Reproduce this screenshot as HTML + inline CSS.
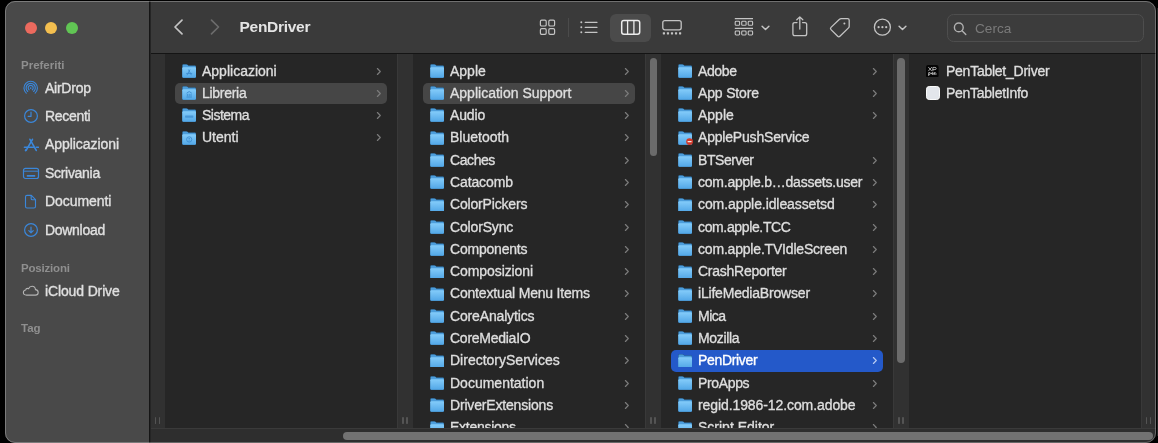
<!DOCTYPE html>
<html><head><meta charset="utf-8"><title>Finder</title>
<style>
html,body{margin:0;padding:0;background:#000;}
body{width:1158px;height:443px;overflow:hidden;position:relative;font-family:"Liberation Sans",sans-serif;}
#win{position:absolute;left:5px;top:1px;width:1151px;height:442px;border-radius:10px;overflow:hidden;background:#262626;box-sizing:border-box;}
#winb{position:absolute;left:5px;top:1px;width:1151px;height:442px;border-radius:10px;box-sizing:border-box;border:1px solid rgba(255,255,255,0.28);pointer-events:none;z-index:50;}
#inner{will-change:transform;position:absolute;left:-5px;top:-1px;width:1158px;height:443px;}
#sidebar{position:absolute;left:0;top:0;width:149px;height:443px;background:#494949;}
#sdiv{position:absolute;left:149px;top:0;width:2px;height:443px;background:linear-gradient(90deg,#151515 0,#151515 50%,#252525 50%);z-index:5;}
#toolbar{position:absolute;left:150px;top:0;width:1008px;height:53px;background:#3a3a3a;}
#tline{position:absolute;left:150px;top:53px;width:1008px;height:1px;background:#141414;}
.strip{position:absolute;top:54px;height:376px;background:#313131;box-sizing:border-box;border-left:1px solid #393939;}
.t{position:absolute;-webkit-text-stroke:0.35px currentColor;color:#dedede;font-size:14px;line-height:22px;white-space:nowrap;}
.fi,.cv{position:absolute;}
.selg{position:absolute;width:212px;height:21.7px;border-radius:5px;background:#464646;}
.selb{position:absolute;width:212px;height:21.7px;border-radius:5px;background:#2459c9;}
.sh{position:absolute;color:#8f8f8f;font-size:11.5px;font-weight:bold;line-height:14px;}
.si{position:absolute;-webkit-text-stroke:0.35px currentColor;color:#e0e0e0;font-size:14px;line-height:20px;white-space:nowrap;}
.abs{position:absolute;}
.hd{position:absolute;top:417px;width:1.5px;height:7px;background:#545454;border-radius:0.7px;}
.vth{position:absolute;width:7.6px;border-radius:4px;background:#6b6b6b;}
</style></head><body>
<svg width="0" height="0" style="position:absolute"><defs><linearGradient id="fg" x1="0" y1="0" x2="0" y2="1"><stop offset="0" stop-color="#84ccfa"/><stop offset="1" stop-color="#52a7e7"/></linearGradient></defs></svg>
<div id="win"><div id="inner">
<div id="sidebar"></div><div id="sdiv"></div>
<div id="toolbar"></div><div id="tline"></div>
<div class="strip" style="left:150px;width:15px"></div>
<div class="hd" style="left:154.6px"></div><div class="hd" style="left:158.8px"></div>
<div class="strip" style="left:397px;width:16px"></div>
<div class="hd" style="left:402.1px"></div><div class="hd" style="left:406.3px"></div>
<div class="strip" style="left:645px;width:16px"></div>
<div class="hd" style="left:650.1px"></div><div class="hd" style="left:654.3px"></div>
<div class="strip" style="left:893px;width:16px"></div>
<div class="hd" style="left:898.1px"></div><div class="hd" style="left:902.3px"></div>
<div class="strip" style="left:1141px;width:15px"></div>
<div class="hd" style="left:1145.6px"></div><div class="hd" style="left:1149.8px"></div>
<div class="vth" style="left:649.5px;top:57.5px;height:98px"></div>
<div class="vth" style="left:897.3px;top:57.5px;height:305px"></div>
<div class="abs" style="left:25px;top:21.8px;width:12px;height:12px;border-radius:6px;background:#ec6a5e"></div>
<div class="abs" style="left:45.3px;top:21.8px;width:12px;height:12px;border-radius:6px;background:#f4bf4f"></div>
<div class="abs" style="left:65.5px;top:21.8px;width:12px;height:12px;border-radius:6px;background:#61c554"></div>
<div class="sh" style="left:21px;top:58px">Preferiti</div>
<div class="sh" style="left:21px;top:261px;letter-spacing:-0.19px">Posizioni</div>
<div class="sh" style="left:21px;top:321px">Tag</div>
<div class="si" style="left:45px;top:78px;letter-spacing:-0.250px">AirDrop</div>
<div class="si" style="left:45px;top:106px;letter-spacing:-0.300px">Recenti</div>
<div class="si" style="left:45px;top:134px;letter-spacing:-0.055px">Applicazioni</div>
<div class="si" style="left:45px;top:163px;letter-spacing:-0.300px">Scrivania</div>
<div class="si" style="left:45px;top:191px;letter-spacing:-0.075px">Documenti</div>
<div class="si" style="left:45px;top:220px;letter-spacing:-0.300px">Download</div>
<div class="si" style="left:45px;top:281px;letter-spacing:-0.136px">iCloud Drive</div>
<svg class="abs" style="left:23.3px;top:79.8px" width="15.4" height="15.4" viewBox="0 0 16 16" fill="none" stroke="#3b87da" stroke-width="1.2" stroke-linecap="round"><path d="M3.4 13.6 A7 7 0 1 1 12.6 13.6"/><path d="M4.9 11.9 A4.8 4.8 0 1 1 11.1 11.9"/><path d="M6.3 10.2 A2.6 2.6 0 1 1 9.7 10.2"/><circle cx="8" cy="8.4" r="0.9" fill="#3b87da" stroke="none"/></svg>
<svg class="abs" style="left:23px;top:108.4px" width="16" height="16" viewBox="0 0 16 16" fill="none" stroke="#3b87da" stroke-width="1.2" stroke-linecap="round" stroke-linejoin="round"><circle cx="8" cy="8" r="6.4"/><path d="M8 4.2 L8 8.4 L5.2 8.4"/></svg>
<svg class="abs" style="left:22.6px;top:136.5px" width="16.8" height="16.8" viewBox="0 0 16 16" fill="none" stroke="#3b87da" stroke-width="1.55" stroke-linecap="round" stroke-linejoin="round"><path d="M6.6 2.2 L12.6 12.8"/><path d="M9 2.2 L3 12.8"/><path d="M1.4 9.8 L10.2 9.8"/><path d="M12.6 9.8 L14.6 9.8"/><path d="M2.4 12.9 L2.9 12.1"/></svg>
<svg class="abs" style="left:22px;top:166.5px" width="18" height="13" viewBox="0 0 18 13" fill="none" stroke="#3b87da" stroke-width="1.2"><rect x="1.5" y="1.3" width="15" height="10.2" rx="2"/><path d="M1.5 4.2 L16.5 4.2" stroke-width="1"/><path d="M5.4 8.9 L12.6 8.9" stroke-width="1.6" stroke-linecap="round"/></svg>
<svg class="abs" style="left:24.3px;top:194.2px" width="13.2" height="15.6" viewBox="0 0 14 16" fill="none" stroke="#3b87da" stroke-width="1.2" stroke-linejoin="round"><path d="M3.2 1.2 L7.8 1.2 L12.2 5.6 L12.2 13 Q12.2 14.6 10.6 14.6 L3.2 14.6 Q1.6 14.6 1.6 13 L1.6 2.8 Q1.6 1.2 3.2 1.2 Z"/><path d="M7.6 1.4 L7.6 4.4 Q7.6 5.8 9 5.8 L12 5.8"/></svg>
<svg class="abs" style="left:23px;top:222px" width="16" height="16" viewBox="0 0 16 16" fill="none" stroke="#3b87da" stroke-width="1.2" stroke-linecap="round" stroke-linejoin="round"><circle cx="8" cy="8" r="6.4"/><path d="M8 5.2 L8 10.6 M5.8 8.6 L8 10.8 L10.2 8.6"/></svg>
<svg class="abs" style="left:22.1px;top:283.7px" width="17.6" height="13.2" viewBox="0 0 20 15" fill="none" stroke="#b4b4b4" stroke-width="1.25" stroke-linejoin="round"><path d="M5.2 12.6 Q1.6 12.6 1.6 9.6 Q1.6 7.2 4.2 6.8 Q4.4 5 6.2 5 Q6.9 5 7.4 5.3 Q8.6 2.6 11.4 2.6 Q15 2.6 15.3 6.4 Q18.4 6.8 18.4 9.6 Q18.4 12.6 15.2 12.6 Z"/></svg>
<svg class="abs" style="left:172px;top:18px" width="13" height="18" viewBox="0 0 13 18" fill="none" stroke-linecap="round" stroke-linejoin="round" stroke-width="1.7"><path d="M10 2.2 L3 9 L10 15.8" stroke="#c4c4c4"/></svg>
<svg class="abs" style="left:208px;top:18px" width="13" height="18" viewBox="0 0 13 18" fill="none" stroke-linecap="round" stroke-linejoin="round" stroke-width="1.7"><path d="M3.5 2.2 L10.5 9 L3.5 15.8" stroke="#6c6c6c"/></svg>
<div class="abs" style="left:239.5px;top:17px;font-size:15.5px;font-weight:bold;color:#e4e4e4;line-height:20px;white-space:nowrap;letter-spacing:-0.28px">PenDriver</div>
<svg class="abs" style="left:539px;top:19px" width="17" height="17" viewBox="0 0 17 17" fill="none" stroke="#c4c4c4" stroke-width="1.2"><rect x="1.4" y="1.2" width="5.8" height="5.8" rx="1.3"/><rect x="9.8" y="1.2" width="5.8" height="5.8" rx="1.3"/><rect x="1.4" y="9.6" width="5.8" height="5.8" rx="1.3"/><rect x="9.8" y="9.6" width="5.8" height="5.8" rx="1.3"/></svg>
<div class="abs" style="left:568px;top:18px;width:1px;height:19px;background:#4b4b4b"></div>
<svg class="abs" style="left:579px;top:19px" width="20" height="17" viewBox="0 0 20 17" fill="none" stroke="#c4c4c4" stroke-width="1.3" stroke-linecap="round"><path d="M6.2 3.3 L18 3.3 M6.2 8.3 L18 8.3 M6.2 13.3 L18 13.3"/><circle cx="2.3" cy="3.3" r="1" fill="#c4c4c4" stroke="none"/><circle cx="2.3" cy="8.3" r="1" fill="#c4c4c4" stroke="none"/><circle cx="2.3" cy="13.3" r="1" fill="#c4c4c4" stroke="none"/></svg>
<div class="abs" style="left:610px;top:13.5px;width:40.5px;height:28.5px;border-radius:6px;background:#4b4b4b"></div>
<svg class="abs" style="left:620px;top:19px" width="22" height="17" viewBox="0 0 22 17" fill="none" stroke="#ececec" stroke-width="1.5"><rect x="1.7" y="1.4" width="18" height="13.8" rx="2.2"/><path d="M7.6 1.4 L7.6 15.2 M13.9 1.4 L13.9 15.2" stroke-width="1.3"/></svg>
<svg class="abs" style="left:661px;top:19px" width="22" height="17" viewBox="0 0 22 17" fill="none" stroke="#c4c4c4" stroke-width="1.3"><rect x="1.8" y="1.6" width="18.4" height="9.2" rx="2"/><g fill="#c4c4c4" stroke="none"><rect x="1.8" y="13.2" width="2.2" height="2.2" rx="0.4"/><rect x="5.85" y="13.2" width="2.2" height="2.2" rx="0.4"/><rect x="9.9" y="13.2" width="2.2" height="2.2" rx="0.4"/><rect x="13.95" y="13.2" width="2.2" height="2.2" rx="0.4"/><rect x="18" y="13.2" width="2.2" height="2.2" rx="0.4"/></g></svg>
<svg class="abs" style="left:734px;top:17px" width="20" height="20" viewBox="0 0 20 20" fill="none" stroke="#c4c4c4" stroke-width="1.1"><path d="M0.8 1.6 L19 1.6 M0.8 11.3 L19 11.3" stroke-width="1.2"/><rect x="1.2" y="4.3" width="4.4" height="4" rx="0.9"/><rect x="7.7" y="4.3" width="4.4" height="4" rx="0.9"/><rect x="14.2" y="4.3" width="4.4" height="4" rx="0.9"/><rect x="1.2" y="14" width="4.4" height="4" rx="0.9"/><rect x="7.7" y="14" width="4.4" height="4" rx="0.9"/><rect x="14.2" y="14" width="4.4" height="4" rx="0.9"/></svg>
<svg class="abs" style="left:759.6px;top:24px" width="11" height="8" viewBox="0 0 11 8" fill="none" stroke="#c4c4c4" stroke-width="1.5" stroke-linecap="round" stroke-linejoin="round"><path d="M2.1 2.2 L5.5 5.5 L8.9 2.2"/></svg>
<svg class="abs" style="left:791px;top:15px" width="18" height="23" viewBox="0 0 18 23" fill="none" stroke="#c4c4c4" stroke-width="1.3" stroke-linecap="round" stroke-linejoin="round"><path d="M6 7.6 L3.8 7.6 Q1.9 7.6 1.9 9.5 L1.9 18.8 Q1.9 20.7 3.8 20.7 L13.8 20.7 Q15.7 20.7 15.7 18.8 L15.7 9.5 Q15.7 7.6 13.8 7.6 L11.6 7.6"/><path d="M8.8 14 L8.8 2.2 M5.8 4.8 L8.8 1.9 L11.8 4.8"/></svg>
<svg class="abs" style="left:828px;top:16px" width="24" height="23" viewBox="0 0 24 23" fill="none" stroke="#c4c4c4" stroke-width="1.3" stroke-linejoin="round"><path d="M13.2 2.6 L19.6 2.6 Q21.2 2.6 21.2 4.2 L21.2 10.2 Q21.2 11.2 20.5 11.9 L11.9 20.3 Q10.8 21.4 9.7 20.3 L3 13.6 Q1.9 12.5 3 11.4 L11.5 3.3 Q12.2 2.6 13.2 2.6 Z"/><circle cx="16.4" cy="7.6" r="1" fill="#c4c4c4" stroke="none"/></svg>
<svg class="abs" style="left:873px;top:17.8px" width="19" height="19" viewBox="0 0 19 19" fill="none" stroke="#c4c4c4" stroke-width="1.3"><circle cx="9.4" cy="9.2" r="8"/><g fill="#c4c4c4" stroke="none"><circle cx="5.6" cy="9.2" r="1.1"/><circle cx="9.4" cy="9.2" r="1.1"/><circle cx="13.2" cy="9.2" r="1.1"/></g></svg>
<svg class="abs" style="left:897.4px;top:24px" width="11" height="8" viewBox="0 0 11 8" fill="none" stroke="#c4c4c4" stroke-width="1.5" stroke-linecap="round" stroke-linejoin="round"><path d="M2.1 2.2 L5.5 5.5 L8.9 2.2"/></svg>
<div class="abs" style="left:947px;top:13.5px;width:197px;height:28.5px;border-radius:6.5px;box-sizing:border-box;border:1px solid #4e4e4e;background:#3c3c3c"></div>
<svg class="abs" style="left:952px;top:20.6px" width="16" height="16" viewBox="0 0 16 16" fill="none" stroke="#b0b0b0" stroke-width="1.4" stroke-linecap="round"><circle cx="6.8" cy="6.4" r="4.4"/><path d="M10.1 9.8 L13.8 13.6"/></svg>
<div class="abs" style="left:975px;top:18.5px;font-size:13.6px;color:#7a7a7a;line-height:20px">Cerca</div>
<!--ROWS-->
<svg class="fi" style="left:181.8px;top:63.90px" width="14.4" height="13.8" viewBox="0 0 15 14" preserveAspectRatio="none"><path d="M0.3 1.5 Q0.3 0.2 1.6 0.2 L4.6 0.2 Q5.3 0.2 5.8 0.7 L6.7 1.6 L13.4 1.6 Q14.7 1.6 14.7 2.9 L14.7 12.6 Q14.7 13.9 13.4 13.9 L1.6 13.9 Q0.3 13.9 0.3 12.6 Z" fill="#4c9ddb" stroke="#0f2f4d" stroke-opacity="0.55" stroke-width="0.55"/><path d="M0.3 4.3 Q0.3 3.3 1.3 3.3 L13.7 3.3 Q14.7 3.3 14.7 4.3 L14.7 12.6 Q14.7 13.9 13.4 13.9 L1.6 13.9 Q0.3 13.9 0.3 12.6 Z" fill="url(#fg)"/><g fill="none" stroke="#3d8ccf" stroke-width="0.9" stroke-linecap="round"><path d="M6.9 6 L9.6 11 M8.1 6 L5.4 11 M4.8 9.6 L10.2 9.6"/></g></svg>
<div class="t" style="left:202px;top:60px">Applicazioni</div>
<svg class="cv" style="left:375.6px;top:66.55px" width="6" height="9" viewBox="0 0 6 9"><path d="M1.4 1.5 L4.3 4.5 L1.4 7.5" fill="none" stroke="#7c7c7c" stroke-width="1.15" stroke-linecap="round" stroke-linejoin="round"/></svg>
<div class="selg" style="left:175px;top:82.79px"></div>
<svg class="fi" style="left:181.8px;top:86.19px" width="14.4" height="13.8" viewBox="0 0 15 14" preserveAspectRatio="none"><path d="M0.3 1.5 Q0.3 0.2 1.6 0.2 L4.6 0.2 Q5.3 0.2 5.8 0.7 L6.7 1.6 L13.4 1.6 Q14.7 1.6 14.7 2.9 L14.7 12.6 Q14.7 13.9 13.4 13.9 L1.6 13.9 Q0.3 13.9 0.3 12.6 Z" fill="#4c9ddb" stroke="#0f2f4d" stroke-opacity="0.55" stroke-width="0.55"/><path d="M0.3 4.3 Q0.3 3.3 1.3 3.3 L13.7 3.3 Q14.7 3.3 14.7 4.3 L14.7 12.6 Q14.7 13.9 13.4 13.9 L1.6 13.9 Q0.3 13.9 0.3 12.6 Z" fill="url(#fg)"/><g fill="none" stroke="#3d8ccf" stroke-width="0.9"><path d="M4.8 7.3 L7.5 5.6 L10.2 7.3 M5.6 8 L5.6 10.4 M7.5 8 L7.5 10.4 M9.4 8 L9.4 10.4 M4.6 11.2 L10.4 11.2"/></g></svg>
<div class="t" style="left:202px;top:82px;letter-spacing:-0.286px">Libreria</div>
<svg class="cv" style="left:375.6px;top:88.84px" width="6" height="9" viewBox="0 0 6 9"><path d="M1.4 1.5 L4.3 4.5 L1.4 7.5" fill="none" stroke="#7c7c7c" stroke-width="1.15" stroke-linecap="round" stroke-linejoin="round"/></svg>
<svg class="fi" style="left:181.8px;top:108.48px" width="14.4" height="13.8" viewBox="0 0 15 14" preserveAspectRatio="none"><path d="M0.3 1.5 Q0.3 0.2 1.6 0.2 L4.6 0.2 Q5.3 0.2 5.8 0.7 L6.7 1.6 L13.4 1.6 Q14.7 1.6 14.7 2.9 L14.7 12.6 Q14.7 13.9 13.4 13.9 L1.6 13.9 Q0.3 13.9 0.3 12.6 Z" fill="#4c9ddb" stroke="#0f2f4d" stroke-opacity="0.55" stroke-width="0.55"/><path d="M0.3 4.3 Q0.3 3.3 1.3 3.3 L13.7 3.3 Q14.7 3.3 14.7 4.3 L14.7 12.6 Q14.7 13.9 13.4 13.9 L1.6 13.9 Q0.3 13.9 0.3 12.6 Z" fill="url(#fg)"/><g fill="#3d8ccf"><rect x="3.2" y="7.6" width="8.6" height="2.2" rx="0.6" opacity="0.75"/></g></svg>
<div class="t" style="left:202px;top:104px;letter-spacing:-0.500px">Sistema</div>
<svg class="cv" style="left:375.6px;top:111.13px" width="6" height="9" viewBox="0 0 6 9"><path d="M1.4 1.5 L4.3 4.5 L1.4 7.5" fill="none" stroke="#7c7c7c" stroke-width="1.15" stroke-linecap="round" stroke-linejoin="round"/></svg>
<svg class="fi" style="left:181.8px;top:130.77px" width="14.4" height="13.8" viewBox="0 0 15 14" preserveAspectRatio="none"><path d="M0.3 1.5 Q0.3 0.2 1.6 0.2 L4.6 0.2 Q5.3 0.2 5.8 0.7 L6.7 1.6 L13.4 1.6 Q14.7 1.6 14.7 2.9 L14.7 12.6 Q14.7 13.9 13.4 13.9 L1.6 13.9 Q0.3 13.9 0.3 12.6 Z" fill="#4c9ddb" stroke="#0f2f4d" stroke-opacity="0.55" stroke-width="0.55"/><path d="M0.3 4.3 Q0.3 3.3 1.3 3.3 L13.7 3.3 Q14.7 3.3 14.7 4.3 L14.7 12.6 Q14.7 13.9 13.4 13.9 L1.6 13.9 Q0.3 13.9 0.3 12.6 Z" fill="url(#fg)"/><g fill="none" stroke="#3d8ccf" stroke-width="0.9"><circle cx="7.5" cy="8.6" r="2.7"/><circle cx="7.5" cy="7.9" r="0.8" fill="#3d8ccf" stroke="none"/><path d="M5.9 10.4 Q7.5 8.8 9.1 10.4" fill="#3d8ccf" stroke="none"/></g></svg>
<div class="t" style="left:202px;top:126px">Utenti</div>
<svg class="cv" style="left:375.6px;top:133.42px" width="6" height="9" viewBox="0 0 6 9"><path d="M1.4 1.5 L4.3 4.5 L1.4 7.5" fill="none" stroke="#7c7c7c" stroke-width="1.15" stroke-linecap="round" stroke-linejoin="round"/></svg>
<svg class="fi" style="left:429.8px;top:63.90px" width="14.4" height="13.8" viewBox="0 0 15 14" preserveAspectRatio="none"><path d="M0.3 1.5 Q0.3 0.2 1.6 0.2 L4.6 0.2 Q5.3 0.2 5.8 0.7 L6.7 1.6 L13.4 1.6 Q14.7 1.6 14.7 2.9 L14.7 12.6 Q14.7 13.9 13.4 13.9 L1.6 13.9 Q0.3 13.9 0.3 12.6 Z" fill="#4c9ddb" stroke="#0f2f4d" stroke-opacity="0.55" stroke-width="0.55"/><path d="M0.3 4.3 Q0.3 3.3 1.3 3.3 L13.7 3.3 Q14.7 3.3 14.7 4.3 L14.7 12.6 Q14.7 13.9 13.4 13.9 L1.6 13.9 Q0.3 13.9 0.3 12.6 Z" fill="url(#fg)"/></svg>
<div class="t" style="left:450px;top:60px">Apple</div>
<svg class="cv" style="left:623.6px;top:66.55px" width="6" height="9" viewBox="0 0 6 9"><path d="M1.4 1.5 L4.3 4.5 L1.4 7.5" fill="none" stroke="#7c7c7c" stroke-width="1.15" stroke-linecap="round" stroke-linejoin="round"/></svg>
<div class="selg" style="left:423px;top:82.79px"></div>
<svg class="fi" style="left:429.8px;top:86.19px" width="14.4" height="13.8" viewBox="0 0 15 14" preserveAspectRatio="none"><path d="M0.3 1.5 Q0.3 0.2 1.6 0.2 L4.6 0.2 Q5.3 0.2 5.8 0.7 L6.7 1.6 L13.4 1.6 Q14.7 1.6 14.7 2.9 L14.7 12.6 Q14.7 13.9 13.4 13.9 L1.6 13.9 Q0.3 13.9 0.3 12.6 Z" fill="#4c9ddb" stroke="#0f2f4d" stroke-opacity="0.55" stroke-width="0.55"/><path d="M0.3 4.3 Q0.3 3.3 1.3 3.3 L13.7 3.3 Q14.7 3.3 14.7 4.3 L14.7 12.6 Q14.7 13.9 13.4 13.9 L1.6 13.9 Q0.3 13.9 0.3 12.6 Z" fill="url(#fg)"/></svg>
<div class="t" style="left:450px;top:82px">Application Support</div>
<svg class="cv" style="left:623.6px;top:88.84px" width="6" height="9" viewBox="0 0 6 9"><path d="M1.4 1.5 L4.3 4.5 L1.4 7.5" fill="none" stroke="#7c7c7c" stroke-width="1.15" stroke-linecap="round" stroke-linejoin="round"/></svg>
<svg class="fi" style="left:429.8px;top:108.48px" width="14.4" height="13.8" viewBox="0 0 15 14" preserveAspectRatio="none"><path d="M0.3 1.5 Q0.3 0.2 1.6 0.2 L4.6 0.2 Q5.3 0.2 5.8 0.7 L6.7 1.6 L13.4 1.6 Q14.7 1.6 14.7 2.9 L14.7 12.6 Q14.7 13.9 13.4 13.9 L1.6 13.9 Q0.3 13.9 0.3 12.6 Z" fill="#4c9ddb" stroke="#0f2f4d" stroke-opacity="0.55" stroke-width="0.55"/><path d="M0.3 4.3 Q0.3 3.3 1.3 3.3 L13.7 3.3 Q14.7 3.3 14.7 4.3 L14.7 12.6 Q14.7 13.9 13.4 13.9 L1.6 13.9 Q0.3 13.9 0.3 12.6 Z" fill="url(#fg)"/></svg>
<div class="t" style="left:450px;top:104px;letter-spacing:-0.150px">Audio</div>
<svg class="cv" style="left:623.6px;top:111.13px" width="6" height="9" viewBox="0 0 6 9"><path d="M1.4 1.5 L4.3 4.5 L1.4 7.5" fill="none" stroke="#7c7c7c" stroke-width="1.15" stroke-linecap="round" stroke-linejoin="round"/></svg>
<svg class="fi" style="left:429.8px;top:130.77px" width="14.4" height="13.8" viewBox="0 0 15 14" preserveAspectRatio="none"><path d="M0.3 1.5 Q0.3 0.2 1.6 0.2 L4.6 0.2 Q5.3 0.2 5.8 0.7 L6.7 1.6 L13.4 1.6 Q14.7 1.6 14.7 2.9 L14.7 12.6 Q14.7 13.9 13.4 13.9 L1.6 13.9 Q0.3 13.9 0.3 12.6 Z" fill="#4c9ddb" stroke="#0f2f4d" stroke-opacity="0.55" stroke-width="0.55"/><path d="M0.3 4.3 Q0.3 3.3 1.3 3.3 L13.7 3.3 Q14.7 3.3 14.7 4.3 L14.7 12.6 Q14.7 13.9 13.4 13.9 L1.6 13.9 Q0.3 13.9 0.3 12.6 Z" fill="url(#fg)"/></svg>
<div class="t" style="left:450px;top:126px">Bluetooth</div>
<svg class="cv" style="left:623.6px;top:133.42px" width="6" height="9" viewBox="0 0 6 9"><path d="M1.4 1.5 L4.3 4.5 L1.4 7.5" fill="none" stroke="#7c7c7c" stroke-width="1.15" stroke-linecap="round" stroke-linejoin="round"/></svg>
<svg class="fi" style="left:429.8px;top:153.06px" width="14.4" height="13.8" viewBox="0 0 15 14" preserveAspectRatio="none"><path d="M0.3 1.5 Q0.3 0.2 1.6 0.2 L4.6 0.2 Q5.3 0.2 5.8 0.7 L6.7 1.6 L13.4 1.6 Q14.7 1.6 14.7 2.9 L14.7 12.6 Q14.7 13.9 13.4 13.9 L1.6 13.9 Q0.3 13.9 0.3 12.6 Z" fill="#4c9ddb" stroke="#0f2f4d" stroke-opacity="0.55" stroke-width="0.55"/><path d="M0.3 4.3 Q0.3 3.3 1.3 3.3 L13.7 3.3 Q14.7 3.3 14.7 4.3 L14.7 12.6 Q14.7 13.9 13.4 13.9 L1.6 13.9 Q0.3 13.9 0.3 12.6 Z" fill="url(#fg)"/></svg>
<div class="t" style="left:450px;top:149px;letter-spacing:-0.420px">Caches</div>
<svg class="cv" style="left:623.6px;top:155.71px" width="6" height="9" viewBox="0 0 6 9"><path d="M1.4 1.5 L4.3 4.5 L1.4 7.5" fill="none" stroke="#7c7c7c" stroke-width="1.15" stroke-linecap="round" stroke-linejoin="round"/></svg>
<svg class="fi" style="left:429.8px;top:175.35px" width="14.4" height="13.8" viewBox="0 0 15 14" preserveAspectRatio="none"><path d="M0.3 1.5 Q0.3 0.2 1.6 0.2 L4.6 0.2 Q5.3 0.2 5.8 0.7 L6.7 1.6 L13.4 1.6 Q14.7 1.6 14.7 2.9 L14.7 12.6 Q14.7 13.9 13.4 13.9 L1.6 13.9 Q0.3 13.9 0.3 12.6 Z" fill="#4c9ddb" stroke="#0f2f4d" stroke-opacity="0.55" stroke-width="0.55"/><path d="M0.3 4.3 Q0.3 3.3 1.3 3.3 L13.7 3.3 Q14.7 3.3 14.7 4.3 L14.7 12.6 Q14.7 13.9 13.4 13.9 L1.6 13.9 Q0.3 13.9 0.3 12.6 Z" fill="url(#fg)"/></svg>
<div class="t" style="left:450px;top:171px;letter-spacing:-0.114px">Catacomb</div>
<svg class="cv" style="left:623.6px;top:178.00px" width="6" height="9" viewBox="0 0 6 9"><path d="M1.4 1.5 L4.3 4.5 L1.4 7.5" fill="none" stroke="#7c7c7c" stroke-width="1.15" stroke-linecap="round" stroke-linejoin="round"/></svg>
<svg class="fi" style="left:429.8px;top:197.64px" width="14.4" height="13.8" viewBox="0 0 15 14" preserveAspectRatio="none"><path d="M0.3 1.5 Q0.3 0.2 1.6 0.2 L4.6 0.2 Q5.3 0.2 5.8 0.7 L6.7 1.6 L13.4 1.6 Q14.7 1.6 14.7 2.9 L14.7 12.6 Q14.7 13.9 13.4 13.9 L1.6 13.9 Q0.3 13.9 0.3 12.6 Z" fill="#4c9ddb" stroke="#0f2f4d" stroke-opacity="0.55" stroke-width="0.55"/><path d="M0.3 4.3 Q0.3 3.3 1.3 3.3 L13.7 3.3 Q14.7 3.3 14.7 4.3 L14.7 12.6 Q14.7 13.9 13.4 13.9 L1.6 13.9 Q0.3 13.9 0.3 12.6 Z" fill="url(#fg)"/></svg>
<div class="t" style="left:450px;top:193px;letter-spacing:-0.173px">ColorPickers</div>
<svg class="cv" style="left:623.6px;top:200.29px" width="6" height="9" viewBox="0 0 6 9"><path d="M1.4 1.5 L4.3 4.5 L1.4 7.5" fill="none" stroke="#7c7c7c" stroke-width="1.15" stroke-linecap="round" stroke-linejoin="round"/></svg>
<svg class="fi" style="left:429.8px;top:219.93px" width="14.4" height="13.8" viewBox="0 0 15 14" preserveAspectRatio="none"><path d="M0.3 1.5 Q0.3 0.2 1.6 0.2 L4.6 0.2 Q5.3 0.2 5.8 0.7 L6.7 1.6 L13.4 1.6 Q14.7 1.6 14.7 2.9 L14.7 12.6 Q14.7 13.9 13.4 13.9 L1.6 13.9 Q0.3 13.9 0.3 12.6 Z" fill="#4c9ddb" stroke="#0f2f4d" stroke-opacity="0.55" stroke-width="0.55"/><path d="M0.3 4.3 Q0.3 3.3 1.3 3.3 L13.7 3.3 Q14.7 3.3 14.7 4.3 L14.7 12.6 Q14.7 13.9 13.4 13.9 L1.6 13.9 Q0.3 13.9 0.3 12.6 Z" fill="url(#fg)"/></svg>
<div class="t" style="left:450px;top:216px;letter-spacing:-0.162px">ColorSync</div>
<svg class="cv" style="left:623.6px;top:222.58px" width="6" height="9" viewBox="0 0 6 9"><path d="M1.4 1.5 L4.3 4.5 L1.4 7.5" fill="none" stroke="#7c7c7c" stroke-width="1.15" stroke-linecap="round" stroke-linejoin="round"/></svg>
<svg class="fi" style="left:429.8px;top:242.22px" width="14.4" height="13.8" viewBox="0 0 15 14" preserveAspectRatio="none"><path d="M0.3 1.5 Q0.3 0.2 1.6 0.2 L4.6 0.2 Q5.3 0.2 5.8 0.7 L6.7 1.6 L13.4 1.6 Q14.7 1.6 14.7 2.9 L14.7 12.6 Q14.7 13.9 13.4 13.9 L1.6 13.9 Q0.3 13.9 0.3 12.6 Z" fill="#4c9ddb" stroke="#0f2f4d" stroke-opacity="0.55" stroke-width="0.55"/><path d="M0.3 4.3 Q0.3 3.3 1.3 3.3 L13.7 3.3 Q14.7 3.3 14.7 4.3 L14.7 12.6 Q14.7 13.9 13.4 13.9 L1.6 13.9 Q0.3 13.9 0.3 12.6 Z" fill="url(#fg)"/></svg>
<div class="t" style="left:450px;top:238px;letter-spacing:-0.211px">Components</div>
<svg class="cv" style="left:623.6px;top:244.87px" width="6" height="9" viewBox="0 0 6 9"><path d="M1.4 1.5 L4.3 4.5 L1.4 7.5" fill="none" stroke="#7c7c7c" stroke-width="1.15" stroke-linecap="round" stroke-linejoin="round"/></svg>
<svg class="fi" style="left:429.8px;top:264.51px" width="14.4" height="13.8" viewBox="0 0 15 14" preserveAspectRatio="none"><path d="M0.3 1.5 Q0.3 0.2 1.6 0.2 L4.6 0.2 Q5.3 0.2 5.8 0.7 L6.7 1.6 L13.4 1.6 Q14.7 1.6 14.7 2.9 L14.7 12.6 Q14.7 13.9 13.4 13.9 L1.6 13.9 Q0.3 13.9 0.3 12.6 Z" fill="#4c9ddb" stroke="#0f2f4d" stroke-opacity="0.55" stroke-width="0.55"/><path d="M0.3 4.3 Q0.3 3.3 1.3 3.3 L13.7 3.3 Q14.7 3.3 14.7 4.3 L14.7 12.6 Q14.7 13.9 13.4 13.9 L1.6 13.9 Q0.3 13.9 0.3 12.6 Z" fill="url(#fg)"/></svg>
<div class="t" style="left:450px;top:260px;letter-spacing:-0.082px">Composizioni</div>
<svg class="cv" style="left:623.6px;top:267.16px" width="6" height="9" viewBox="0 0 6 9"><path d="M1.4 1.5 L4.3 4.5 L1.4 7.5" fill="none" stroke="#7c7c7c" stroke-width="1.15" stroke-linecap="round" stroke-linejoin="round"/></svg>
<svg class="fi" style="left:429.8px;top:286.80px" width="14.4" height="13.8" viewBox="0 0 15 14" preserveAspectRatio="none"><path d="M0.3 1.5 Q0.3 0.2 1.6 0.2 L4.6 0.2 Q5.3 0.2 5.8 0.7 L6.7 1.6 L13.4 1.6 Q14.7 1.6 14.7 2.9 L14.7 12.6 Q14.7 13.9 13.4 13.9 L1.6 13.9 Q0.3 13.9 0.3 12.6 Z" fill="#4c9ddb" stroke="#0f2f4d" stroke-opacity="0.55" stroke-width="0.55"/><path d="M0.3 4.3 Q0.3 3.3 1.3 3.3 L13.7 3.3 Q14.7 3.3 14.7 4.3 L14.7 12.6 Q14.7 13.9 13.4 13.9 L1.6 13.9 Q0.3 13.9 0.3 12.6 Z" fill="url(#fg)"/></svg>
<div class="t" style="left:450px;top:282px;letter-spacing:-0.195px">Contextual Menu Items</div>
<svg class="cv" style="left:623.6px;top:289.45px" width="6" height="9" viewBox="0 0 6 9"><path d="M1.4 1.5 L4.3 4.5 L1.4 7.5" fill="none" stroke="#7c7c7c" stroke-width="1.15" stroke-linecap="round" stroke-linejoin="round"/></svg>
<svg class="fi" style="left:429.8px;top:309.09px" width="14.4" height="13.8" viewBox="0 0 15 14" preserveAspectRatio="none"><path d="M0.3 1.5 Q0.3 0.2 1.6 0.2 L4.6 0.2 Q5.3 0.2 5.8 0.7 L6.7 1.6 L13.4 1.6 Q14.7 1.6 14.7 2.9 L14.7 12.6 Q14.7 13.9 13.4 13.9 L1.6 13.9 Q0.3 13.9 0.3 12.6 Z" fill="#4c9ddb" stroke="#0f2f4d" stroke-opacity="0.55" stroke-width="0.55"/><path d="M0.3 4.3 Q0.3 3.3 1.3 3.3 L13.7 3.3 Q14.7 3.3 14.7 4.3 L14.7 12.6 Q14.7 13.9 13.4 13.9 L1.6 13.9 Q0.3 13.9 0.3 12.6 Z" fill="url(#fg)"/></svg>
<div class="t" style="left:450px;top:305px;letter-spacing:-0.158px">CoreAnalytics</div>
<svg class="cv" style="left:623.6px;top:311.74px" width="6" height="9" viewBox="0 0 6 9"><path d="M1.4 1.5 L4.3 4.5 L1.4 7.5" fill="none" stroke="#7c7c7c" stroke-width="1.15" stroke-linecap="round" stroke-linejoin="round"/></svg>
<svg class="fi" style="left:429.8px;top:331.38px" width="14.4" height="13.8" viewBox="0 0 15 14" preserveAspectRatio="none"><path d="M0.3 1.5 Q0.3 0.2 1.6 0.2 L4.6 0.2 Q5.3 0.2 5.8 0.7 L6.7 1.6 L13.4 1.6 Q14.7 1.6 14.7 2.9 L14.7 12.6 Q14.7 13.9 13.4 13.9 L1.6 13.9 Q0.3 13.9 0.3 12.6 Z" fill="#4c9ddb" stroke="#0f2f4d" stroke-opacity="0.55" stroke-width="0.55"/><path d="M0.3 4.3 Q0.3 3.3 1.3 3.3 L13.7 3.3 Q14.7 3.3 14.7 4.3 L14.7 12.6 Q14.7 13.9 13.4 13.9 L1.6 13.9 Q0.3 13.9 0.3 12.6 Z" fill="url(#fg)"/></svg>
<div class="t" style="left:450px;top:327px;letter-spacing:-0.260px">CoreMediaIO</div>
<svg class="cv" style="left:623.6px;top:334.03px" width="6" height="9" viewBox="0 0 6 9"><path d="M1.4 1.5 L4.3 4.5 L1.4 7.5" fill="none" stroke="#7c7c7c" stroke-width="1.15" stroke-linecap="round" stroke-linejoin="round"/></svg>
<svg class="fi" style="left:429.8px;top:353.67px" width="14.4" height="13.8" viewBox="0 0 15 14" preserveAspectRatio="none"><path d="M0.3 1.5 Q0.3 0.2 1.6 0.2 L4.6 0.2 Q5.3 0.2 5.8 0.7 L6.7 1.6 L13.4 1.6 Q14.7 1.6 14.7 2.9 L14.7 12.6 Q14.7 13.9 13.4 13.9 L1.6 13.9 Q0.3 13.9 0.3 12.6 Z" fill="#4c9ddb" stroke="#0f2f4d" stroke-opacity="0.55" stroke-width="0.55"/><path d="M0.3 4.3 Q0.3 3.3 1.3 3.3 L13.7 3.3 Q14.7 3.3 14.7 4.3 L14.7 12.6 Q14.7 13.9 13.4 13.9 L1.6 13.9 Q0.3 13.9 0.3 12.6 Z" fill="url(#fg)"/></svg>
<div class="t" style="left:450px;top:349px">DirectoryServices</div>
<svg class="cv" style="left:623.6px;top:356.32px" width="6" height="9" viewBox="0 0 6 9"><path d="M1.4 1.5 L4.3 4.5 L1.4 7.5" fill="none" stroke="#7c7c7c" stroke-width="1.15" stroke-linecap="round" stroke-linejoin="round"/></svg>
<svg class="fi" style="left:429.8px;top:375.96px" width="14.4" height="13.8" viewBox="0 0 15 14" preserveAspectRatio="none"><path d="M0.3 1.5 Q0.3 0.2 1.6 0.2 L4.6 0.2 Q5.3 0.2 5.8 0.7 L6.7 1.6 L13.4 1.6 Q14.7 1.6 14.7 2.9 L14.7 12.6 Q14.7 13.9 13.4 13.9 L1.6 13.9 Q0.3 13.9 0.3 12.6 Z" fill="#4c9ddb" stroke="#0f2f4d" stroke-opacity="0.55" stroke-width="0.55"/><path d="M0.3 4.3 Q0.3 3.3 1.3 3.3 L13.7 3.3 Q14.7 3.3 14.7 4.3 L14.7 12.6 Q14.7 13.9 13.4 13.9 L1.6 13.9 Q0.3 13.9 0.3 12.6 Z" fill="url(#fg)"/></svg>
<div class="t" style="left:450px;top:372px">Documentation</div>
<svg class="cv" style="left:623.6px;top:378.61px" width="6" height="9" viewBox="0 0 6 9"><path d="M1.4 1.5 L4.3 4.5 L1.4 7.5" fill="none" stroke="#7c7c7c" stroke-width="1.15" stroke-linecap="round" stroke-linejoin="round"/></svg>
<svg class="fi" style="left:429.8px;top:398.25px" width="14.4" height="13.8" viewBox="0 0 15 14" preserveAspectRatio="none"><path d="M0.3 1.5 Q0.3 0.2 1.6 0.2 L4.6 0.2 Q5.3 0.2 5.8 0.7 L6.7 1.6 L13.4 1.6 Q14.7 1.6 14.7 2.9 L14.7 12.6 Q14.7 13.9 13.4 13.9 L1.6 13.9 Q0.3 13.9 0.3 12.6 Z" fill="#4c9ddb" stroke="#0f2f4d" stroke-opacity="0.55" stroke-width="0.55"/><path d="M0.3 4.3 Q0.3 3.3 1.3 3.3 L13.7 3.3 Q14.7 3.3 14.7 4.3 L14.7 12.6 Q14.7 13.9 13.4 13.9 L1.6 13.9 Q0.3 13.9 0.3 12.6 Z" fill="url(#fg)"/></svg>
<div class="t" style="left:450px;top:394px;letter-spacing:-0.173px">DriverExtensions</div>
<svg class="cv" style="left:623.6px;top:400.90px" width="6" height="9" viewBox="0 0 6 9"><path d="M1.4 1.5 L4.3 4.5 L1.4 7.5" fill="none" stroke="#7c7c7c" stroke-width="1.15" stroke-linecap="round" stroke-linejoin="round"/></svg>
<svg class="fi" style="left:429.8px;top:420.54px" width="14.4" height="13.8" viewBox="0 0 15 14" preserveAspectRatio="none"><path d="M0.3 1.5 Q0.3 0.2 1.6 0.2 L4.6 0.2 Q5.3 0.2 5.8 0.7 L6.7 1.6 L13.4 1.6 Q14.7 1.6 14.7 2.9 L14.7 12.6 Q14.7 13.9 13.4 13.9 L1.6 13.9 Q0.3 13.9 0.3 12.6 Z" fill="#4c9ddb" stroke="#0f2f4d" stroke-opacity="0.55" stroke-width="0.55"/><path d="M0.3 4.3 Q0.3 3.3 1.3 3.3 L13.7 3.3 Q14.7 3.3 14.7 4.3 L14.7 12.6 Q14.7 13.9 13.4 13.9 L1.6 13.9 Q0.3 13.9 0.3 12.6 Z" fill="url(#fg)"/></svg>
<div class="t" style="left:450px;top:416px;letter-spacing:-0.267px">Extensions</div>
<svg class="cv" style="left:623.6px;top:423.19px" width="6" height="9" viewBox="0 0 6 9"><path d="M1.4 1.5 L4.3 4.5 L1.4 7.5" fill="none" stroke="#7c7c7c" stroke-width="1.15" stroke-linecap="round" stroke-linejoin="round"/></svg>
<svg class="fi" style="left:677.8px;top:63.90px" width="14.4" height="13.8" viewBox="0 0 15 14" preserveAspectRatio="none"><path d="M0.3 1.5 Q0.3 0.2 1.6 0.2 L4.6 0.2 Q5.3 0.2 5.8 0.7 L6.7 1.6 L13.4 1.6 Q14.7 1.6 14.7 2.9 L14.7 12.6 Q14.7 13.9 13.4 13.9 L1.6 13.9 Q0.3 13.9 0.3 12.6 Z" fill="#4c9ddb" stroke="#0f2f4d" stroke-opacity="0.55" stroke-width="0.55"/><path d="M0.3 4.3 Q0.3 3.3 1.3 3.3 L13.7 3.3 Q14.7 3.3 14.7 4.3 L14.7 12.6 Q14.7 13.9 13.4 13.9 L1.6 13.9 Q0.3 13.9 0.3 12.6 Z" fill="url(#fg)"/></svg>
<div class="t" style="left:698px;top:60px;letter-spacing:-0.375px">Adobe</div>
<svg class="cv" style="left:871.6px;top:66.55px" width="6" height="9" viewBox="0 0 6 9"><path d="M1.4 1.5 L4.3 4.5 L1.4 7.5" fill="none" stroke="#7c7c7c" stroke-width="1.15" stroke-linecap="round" stroke-linejoin="round"/></svg>
<svg class="fi" style="left:677.8px;top:86.19px" width="14.4" height="13.8" viewBox="0 0 15 14" preserveAspectRatio="none"><path d="M0.3 1.5 Q0.3 0.2 1.6 0.2 L4.6 0.2 Q5.3 0.2 5.8 0.7 L6.7 1.6 L13.4 1.6 Q14.7 1.6 14.7 2.9 L14.7 12.6 Q14.7 13.9 13.4 13.9 L1.6 13.9 Q0.3 13.9 0.3 12.6 Z" fill="#4c9ddb" stroke="#0f2f4d" stroke-opacity="0.55" stroke-width="0.55"/><path d="M0.3 4.3 Q0.3 3.3 1.3 3.3 L13.7 3.3 Q14.7 3.3 14.7 4.3 L14.7 12.6 Q14.7 13.9 13.4 13.9 L1.6 13.9 Q0.3 13.9 0.3 12.6 Z" fill="url(#fg)"/></svg>
<div class="t" style="left:698px;top:82px;letter-spacing:-0.162px">App Store</div>
<svg class="cv" style="left:871.6px;top:88.84px" width="6" height="9" viewBox="0 0 6 9"><path d="M1.4 1.5 L4.3 4.5 L1.4 7.5" fill="none" stroke="#7c7c7c" stroke-width="1.15" stroke-linecap="round" stroke-linejoin="round"/></svg>
<svg class="fi" style="left:677.8px;top:108.48px" width="14.4" height="13.8" viewBox="0 0 15 14" preserveAspectRatio="none"><path d="M0.3 1.5 Q0.3 0.2 1.6 0.2 L4.6 0.2 Q5.3 0.2 5.8 0.7 L6.7 1.6 L13.4 1.6 Q14.7 1.6 14.7 2.9 L14.7 12.6 Q14.7 13.9 13.4 13.9 L1.6 13.9 Q0.3 13.9 0.3 12.6 Z" fill="#4c9ddb" stroke="#0f2f4d" stroke-opacity="0.55" stroke-width="0.55"/><path d="M0.3 4.3 Q0.3 3.3 1.3 3.3 L13.7 3.3 Q14.7 3.3 14.7 4.3 L14.7 12.6 Q14.7 13.9 13.4 13.9 L1.6 13.9 Q0.3 13.9 0.3 12.6 Z" fill="url(#fg)"/></svg>
<div class="t" style="left:698px;top:104px">Apple</div>
<svg class="cv" style="left:871.6px;top:111.13px" width="6" height="9" viewBox="0 0 6 9"><path d="M1.4 1.5 L4.3 4.5 L1.4 7.5" fill="none" stroke="#7c7c7c" stroke-width="1.15" stroke-linecap="round" stroke-linejoin="round"/></svg>
<svg class="fi" style="left:677.8px;top:130.77px" width="14.4" height="13.8" viewBox="0 0 15 14" preserveAspectRatio="none"><path d="M0.3 1.5 Q0.3 0.2 1.6 0.2 L4.6 0.2 Q5.3 0.2 5.8 0.7 L6.7 1.6 L13.4 1.6 Q14.7 1.6 14.7 2.9 L14.7 12.6 Q14.7 13.9 13.4 13.9 L1.6 13.9 Q0.3 13.9 0.3 12.6 Z" fill="#4c9ddb" stroke="#0f2f4d" stroke-opacity="0.55" stroke-width="0.55"/><path d="M0.3 4.3 Q0.3 3.3 1.3 3.3 L13.7 3.3 Q14.7 3.3 14.7 4.3 L14.7 12.6 Q14.7 13.9 13.4 13.9 L1.6 13.9 Q0.3 13.9 0.3 12.6 Z" fill="url(#fg)"/></svg>
<div class="t" style="left:698px;top:126px;letter-spacing:-0.187px">ApplePushService</div>
<svg class="fi" style="left:677.8px;top:153.06px" width="14.4" height="13.8" viewBox="0 0 15 14" preserveAspectRatio="none"><path d="M0.3 1.5 Q0.3 0.2 1.6 0.2 L4.6 0.2 Q5.3 0.2 5.8 0.7 L6.7 1.6 L13.4 1.6 Q14.7 1.6 14.7 2.9 L14.7 12.6 Q14.7 13.9 13.4 13.9 L1.6 13.9 Q0.3 13.9 0.3 12.6 Z" fill="#4c9ddb" stroke="#0f2f4d" stroke-opacity="0.55" stroke-width="0.55"/><path d="M0.3 4.3 Q0.3 3.3 1.3 3.3 L13.7 3.3 Q14.7 3.3 14.7 4.3 L14.7 12.6 Q14.7 13.9 13.4 13.9 L1.6 13.9 Q0.3 13.9 0.3 12.6 Z" fill="url(#fg)"/></svg>
<div class="t" style="left:698px;top:149px;letter-spacing:-0.443px">BTServer</div>
<svg class="cv" style="left:871.6px;top:155.71px" width="6" height="9" viewBox="0 0 6 9"><path d="M1.4 1.5 L4.3 4.5 L1.4 7.5" fill="none" stroke="#7c7c7c" stroke-width="1.15" stroke-linecap="round" stroke-linejoin="round"/></svg>
<svg class="fi" style="left:677.8px;top:175.35px" width="14.4" height="13.8" viewBox="0 0 15 14" preserveAspectRatio="none"><path d="M0.3 1.5 Q0.3 0.2 1.6 0.2 L4.6 0.2 Q5.3 0.2 5.8 0.7 L6.7 1.6 L13.4 1.6 Q14.7 1.6 14.7 2.9 L14.7 12.6 Q14.7 13.9 13.4 13.9 L1.6 13.9 Q0.3 13.9 0.3 12.6 Z" fill="#4c9ddb" stroke="#0f2f4d" stroke-opacity="0.55" stroke-width="0.55"/><path d="M0.3 4.3 Q0.3 3.3 1.3 3.3 L13.7 3.3 Q14.7 3.3 14.7 4.3 L14.7 12.6 Q14.7 13.9 13.4 13.9 L1.6 13.9 Q0.3 13.9 0.3 12.6 Z" fill="url(#fg)"/></svg>
<div class="t" style="left:698px;top:171px;letter-spacing:-0.226px">com.apple.b…dassets.user</div>
<svg class="cv" style="left:871.6px;top:178.00px" width="6" height="9" viewBox="0 0 6 9"><path d="M1.4 1.5 L4.3 4.5 L1.4 7.5" fill="none" stroke="#7c7c7c" stroke-width="1.15" stroke-linecap="round" stroke-linejoin="round"/></svg>
<svg class="fi" style="left:677.8px;top:197.64px" width="14.4" height="13.8" viewBox="0 0 15 14" preserveAspectRatio="none"><path d="M0.3 1.5 Q0.3 0.2 1.6 0.2 L4.6 0.2 Q5.3 0.2 5.8 0.7 L6.7 1.6 L13.4 1.6 Q14.7 1.6 14.7 2.9 L14.7 12.6 Q14.7 13.9 13.4 13.9 L1.6 13.9 Q0.3 13.9 0.3 12.6 Z" fill="#4c9ddb" stroke="#0f2f4d" stroke-opacity="0.55" stroke-width="0.55"/><path d="M0.3 4.3 Q0.3 3.3 1.3 3.3 L13.7 3.3 Q14.7 3.3 14.7 4.3 L14.7 12.6 Q14.7 13.9 13.4 13.9 L1.6 13.9 Q0.3 13.9 0.3 12.6 Z" fill="url(#fg)"/></svg>
<div class="t" style="left:698px;top:193px;letter-spacing:-0.085px">com.apple.idleassetsd</div>
<svg class="cv" style="left:871.6px;top:200.29px" width="6" height="9" viewBox="0 0 6 9"><path d="M1.4 1.5 L4.3 4.5 L1.4 7.5" fill="none" stroke="#7c7c7c" stroke-width="1.15" stroke-linecap="round" stroke-linejoin="round"/></svg>
<svg class="fi" style="left:677.8px;top:219.93px" width="14.4" height="13.8" viewBox="0 0 15 14" preserveAspectRatio="none"><path d="M0.3 1.5 Q0.3 0.2 1.6 0.2 L4.6 0.2 Q5.3 0.2 5.8 0.7 L6.7 1.6 L13.4 1.6 Q14.7 1.6 14.7 2.9 L14.7 12.6 Q14.7 13.9 13.4 13.9 L1.6 13.9 Q0.3 13.9 0.3 12.6 Z" fill="#4c9ddb" stroke="#0f2f4d" stroke-opacity="0.55" stroke-width="0.55"/><path d="M0.3 4.3 Q0.3 3.3 1.3 3.3 L13.7 3.3 Q14.7 3.3 14.7 4.3 L14.7 12.6 Q14.7 13.9 13.4 13.9 L1.6 13.9 Q0.3 13.9 0.3 12.6 Z" fill="url(#fg)"/></svg>
<div class="t" style="left:698px;top:216px;letter-spacing:-0.358px">com.apple.TCC</div>
<svg class="cv" style="left:871.6px;top:222.58px" width="6" height="9" viewBox="0 0 6 9"><path d="M1.4 1.5 L4.3 4.5 L1.4 7.5" fill="none" stroke="#7c7c7c" stroke-width="1.15" stroke-linecap="round" stroke-linejoin="round"/></svg>
<svg class="fi" style="left:677.8px;top:242.22px" width="14.4" height="13.8" viewBox="0 0 15 14" preserveAspectRatio="none"><path d="M0.3 1.5 Q0.3 0.2 1.6 0.2 L4.6 0.2 Q5.3 0.2 5.8 0.7 L6.7 1.6 L13.4 1.6 Q14.7 1.6 14.7 2.9 L14.7 12.6 Q14.7 13.9 13.4 13.9 L1.6 13.9 Q0.3 13.9 0.3 12.6 Z" fill="#4c9ddb" stroke="#0f2f4d" stroke-opacity="0.55" stroke-width="0.55"/><path d="M0.3 4.3 Q0.3 3.3 1.3 3.3 L13.7 3.3 Q14.7 3.3 14.7 4.3 L14.7 12.6 Q14.7 13.9 13.4 13.9 L1.6 13.9 Q0.3 13.9 0.3 12.6 Z" fill="url(#fg)"/></svg>
<div class="t" style="left:698px;top:238px;letter-spacing:-0.190px">com.apple.TVIdleScreen</div>
<svg class="cv" style="left:871.6px;top:244.87px" width="6" height="9" viewBox="0 0 6 9"><path d="M1.4 1.5 L4.3 4.5 L1.4 7.5" fill="none" stroke="#7c7c7c" stroke-width="1.15" stroke-linecap="round" stroke-linejoin="round"/></svg>
<svg class="fi" style="left:677.8px;top:264.51px" width="14.4" height="13.8" viewBox="0 0 15 14" preserveAspectRatio="none"><path d="M0.3 1.5 Q0.3 0.2 1.6 0.2 L4.6 0.2 Q5.3 0.2 5.8 0.7 L6.7 1.6 L13.4 1.6 Q14.7 1.6 14.7 2.9 L14.7 12.6 Q14.7 13.9 13.4 13.9 L1.6 13.9 Q0.3 13.9 0.3 12.6 Z" fill="#4c9ddb" stroke="#0f2f4d" stroke-opacity="0.55" stroke-width="0.55"/><path d="M0.3 4.3 Q0.3 3.3 1.3 3.3 L13.7 3.3 Q14.7 3.3 14.7 4.3 L14.7 12.6 Q14.7 13.9 13.4 13.9 L1.6 13.9 Q0.3 13.9 0.3 12.6 Z" fill="url(#fg)"/></svg>
<div class="t" style="left:698px;top:260px;letter-spacing:-0.258px">CrashReporter</div>
<svg class="cv" style="left:871.6px;top:267.16px" width="6" height="9" viewBox="0 0 6 9"><path d="M1.4 1.5 L4.3 4.5 L1.4 7.5" fill="none" stroke="#7c7c7c" stroke-width="1.15" stroke-linecap="round" stroke-linejoin="round"/></svg>
<svg class="fi" style="left:677.8px;top:286.80px" width="14.4" height="13.8" viewBox="0 0 15 14" preserveAspectRatio="none"><path d="M0.3 1.5 Q0.3 0.2 1.6 0.2 L4.6 0.2 Q5.3 0.2 5.8 0.7 L6.7 1.6 L13.4 1.6 Q14.7 1.6 14.7 2.9 L14.7 12.6 Q14.7 13.9 13.4 13.9 L1.6 13.9 Q0.3 13.9 0.3 12.6 Z" fill="#4c9ddb" stroke="#0f2f4d" stroke-opacity="0.55" stroke-width="0.55"/><path d="M0.3 4.3 Q0.3 3.3 1.3 3.3 L13.7 3.3 Q14.7 3.3 14.7 4.3 L14.7 12.6 Q14.7 13.9 13.4 13.9 L1.6 13.9 Q0.3 13.9 0.3 12.6 Z" fill="url(#fg)"/></svg>
<div class="t" style="left:698px;top:282px;letter-spacing:-0.194px">iLifeMediaBrowser</div>
<svg class="cv" style="left:871.6px;top:289.45px" width="6" height="9" viewBox="0 0 6 9"><path d="M1.4 1.5 L4.3 4.5 L1.4 7.5" fill="none" stroke="#7c7c7c" stroke-width="1.15" stroke-linecap="round" stroke-linejoin="round"/></svg>
<svg class="fi" style="left:677.8px;top:309.09px" width="14.4" height="13.8" viewBox="0 0 15 14" preserveAspectRatio="none"><path d="M0.3 1.5 Q0.3 0.2 1.6 0.2 L4.6 0.2 Q5.3 0.2 5.8 0.7 L6.7 1.6 L13.4 1.6 Q14.7 1.6 14.7 2.9 L14.7 12.6 Q14.7 13.9 13.4 13.9 L1.6 13.9 Q0.3 13.9 0.3 12.6 Z" fill="#4c9ddb" stroke="#0f2f4d" stroke-opacity="0.55" stroke-width="0.55"/><path d="M0.3 4.3 Q0.3 3.3 1.3 3.3 L13.7 3.3 Q14.7 3.3 14.7 4.3 L14.7 12.6 Q14.7 13.9 13.4 13.9 L1.6 13.9 Q0.3 13.9 0.3 12.6 Z" fill="url(#fg)"/></svg>
<div class="t" style="left:698px;top:305px;letter-spacing:-0.533px">Mica</div>
<svg class="cv" style="left:871.6px;top:311.74px" width="6" height="9" viewBox="0 0 6 9"><path d="M1.4 1.5 L4.3 4.5 L1.4 7.5" fill="none" stroke="#7c7c7c" stroke-width="1.15" stroke-linecap="round" stroke-linejoin="round"/></svg>
<svg class="fi" style="left:677.8px;top:331.38px" width="14.4" height="13.8" viewBox="0 0 15 14" preserveAspectRatio="none"><path d="M0.3 1.5 Q0.3 0.2 1.6 0.2 L4.6 0.2 Q5.3 0.2 5.8 0.7 L6.7 1.6 L13.4 1.6 Q14.7 1.6 14.7 2.9 L14.7 12.6 Q14.7 13.9 13.4 13.9 L1.6 13.9 Q0.3 13.9 0.3 12.6 Z" fill="#4c9ddb" stroke="#0f2f4d" stroke-opacity="0.55" stroke-width="0.55"/><path d="M0.3 4.3 Q0.3 3.3 1.3 3.3 L13.7 3.3 Q14.7 3.3 14.7 4.3 L14.7 12.6 Q14.7 13.9 13.4 13.9 L1.6 13.9 Q0.3 13.9 0.3 12.6 Z" fill="url(#fg)"/></svg>
<div class="t" style="left:698px;top:327px;letter-spacing:-0.350px">Mozilla</div>
<svg class="cv" style="left:871.6px;top:334.03px" width="6" height="9" viewBox="0 0 6 9"><path d="M1.4 1.5 L4.3 4.5 L1.4 7.5" fill="none" stroke="#7c7c7c" stroke-width="1.15" stroke-linecap="round" stroke-linejoin="round"/></svg>
<div class="selb" style="left:671px;top:350.27px"></div>
<svg class="fi" style="left:677.8px;top:353.67px" width="14.4" height="13.8" viewBox="0 0 15 14" preserveAspectRatio="none"><path d="M0.3 1.5 Q0.3 0.2 1.6 0.2 L4.6 0.2 Q5.3 0.2 5.8 0.7 L6.7 1.6 L13.4 1.6 Q14.7 1.6 14.7 2.9 L14.7 12.6 Q14.7 13.9 13.4 13.9 L1.6 13.9 Q0.3 13.9 0.3 12.6 Z" fill="#4c9ddb" stroke="#0f2f4d" stroke-opacity="0.55" stroke-width="0.55"/><path d="M0.3 4.3 Q0.3 3.3 1.3 3.3 L13.7 3.3 Q14.7 3.3 14.7 4.3 L14.7 12.6 Q14.7 13.9 13.4 13.9 L1.6 13.9 Q0.3 13.9 0.3 12.6 Z" fill="url(#fg)"/></svg>
<div class="t" style="left:698px;top:349px;color:#fff;letter-spacing:-0.338px">PenDriver</div>
<svg class="cv" style="left:871.6px;top:356.32px" width="6" height="9" viewBox="0 0 6 9"><path d="M1.4 1.5 L4.3 4.5 L1.4 7.5" fill="none" stroke="#b9ccf2" stroke-width="1.15" stroke-linecap="round" stroke-linejoin="round"/></svg>
<svg class="fi" style="left:677.8px;top:375.96px" width="14.4" height="13.8" viewBox="0 0 15 14" preserveAspectRatio="none"><path d="M0.3 1.5 Q0.3 0.2 1.6 0.2 L4.6 0.2 Q5.3 0.2 5.8 0.7 L6.7 1.6 L13.4 1.6 Q14.7 1.6 14.7 2.9 L14.7 12.6 Q14.7 13.9 13.4 13.9 L1.6 13.9 Q0.3 13.9 0.3 12.6 Z" fill="#4c9ddb" stroke="#0f2f4d" stroke-opacity="0.55" stroke-width="0.55"/><path d="M0.3 4.3 Q0.3 3.3 1.3 3.3 L13.7 3.3 Q14.7 3.3 14.7 4.3 L14.7 12.6 Q14.7 13.9 13.4 13.9 L1.6 13.9 Q0.3 13.9 0.3 12.6 Z" fill="url(#fg)"/></svg>
<div class="t" style="left:698px;top:372px;letter-spacing:-0.350px">ProApps</div>
<svg class="cv" style="left:871.6px;top:378.61px" width="6" height="9" viewBox="0 0 6 9"><path d="M1.4 1.5 L4.3 4.5 L1.4 7.5" fill="none" stroke="#7c7c7c" stroke-width="1.15" stroke-linecap="round" stroke-linejoin="round"/></svg>
<svg class="fi" style="left:677.8px;top:398.25px" width="14.4" height="13.8" viewBox="0 0 15 14" preserveAspectRatio="none"><path d="M0.3 1.5 Q0.3 0.2 1.6 0.2 L4.6 0.2 Q5.3 0.2 5.8 0.7 L6.7 1.6 L13.4 1.6 Q14.7 1.6 14.7 2.9 L14.7 12.6 Q14.7 13.9 13.4 13.9 L1.6 13.9 Q0.3 13.9 0.3 12.6 Z" fill="#4c9ddb" stroke="#0f2f4d" stroke-opacity="0.55" stroke-width="0.55"/><path d="M0.3 4.3 Q0.3 3.3 1.3 3.3 L13.7 3.3 Q14.7 3.3 14.7 4.3 L14.7 12.6 Q14.7 13.9 13.4 13.9 L1.6 13.9 Q0.3 13.9 0.3 12.6 Z" fill="url(#fg)"/></svg>
<div class="t" style="left:698px;top:394px;letter-spacing:-0.091px">regid.1986-12.com.adobe</div>
<svg class="cv" style="left:871.6px;top:400.90px" width="6" height="9" viewBox="0 0 6 9"><path d="M1.4 1.5 L4.3 4.5 L1.4 7.5" fill="none" stroke="#7c7c7c" stroke-width="1.15" stroke-linecap="round" stroke-linejoin="round"/></svg>
<svg class="fi" style="left:677.8px;top:420.54px" width="14.4" height="13.8" viewBox="0 0 15 14" preserveAspectRatio="none"><path d="M0.3 1.5 Q0.3 0.2 1.6 0.2 L4.6 0.2 Q5.3 0.2 5.8 0.7 L6.7 1.6 L13.4 1.6 Q14.7 1.6 14.7 2.9 L14.7 12.6 Q14.7 13.9 13.4 13.9 L1.6 13.9 Q0.3 13.9 0.3 12.6 Z" fill="#4c9ddb" stroke="#0f2f4d" stroke-opacity="0.55" stroke-width="0.55"/><path d="M0.3 4.3 Q0.3 3.3 1.3 3.3 L13.7 3.3 Q14.7 3.3 14.7 4.3 L14.7 12.6 Q14.7 13.9 13.4 13.9 L1.6 13.9 Q0.3 13.9 0.3 12.6 Z" fill="url(#fg)"/></svg>
<div class="t" style="left:698px;top:416px">Script Editor</div>
<svg class="cv" style="left:871.6px;top:423.19px" width="6" height="9" viewBox="0 0 6 9"><path d="M1.4 1.5 L4.3 4.5 L1.4 7.5" fill="none" stroke="#7c7c7c" stroke-width="1.15" stroke-linecap="round" stroke-linejoin="round"/></svg>
<div class="t" style="left:946px;top:60px;letter-spacing:-0.253px">PenTablet_Driver</div>
<div class="t" style="left:946px;top:82px;letter-spacing:-0.275px">PenTabletInfo</div>
<svg class="abs" style="left:686.00px;top:137.82px" width="7.2" height="7.2" viewBox="0 0 7.2 7.2"><circle cx="3.6" cy="3.6" r="3.45" fill="#cf3b2d"/><rect x="1.5" y="3.0" width="4.2" height="1.2" rx="0.4" fill="#f3e6e4"/></svg>
<svg class="abs" style="left:926.3px;top:64.50px" width="12.6" height="12.6" viewBox="0 0 12.6 12.6"><rect x="0" y="0" width="12.6" height="12.6" rx="2.2" fill="#050505"/><g fill="none" stroke="#d8d8d8" stroke-width="0.75" stroke-linecap="round" stroke-linejoin="round"><path d="M2.6 2.4 L5.6 5.8 M5.6 2.4 L2.6 5.8"/><path d="M6.9 5.8 L6.9 2.4 L9 2.4 Q10.2 2.4 10.2 3.5 Q10.2 4.6 9 4.6 L6.9 4.6"/><path d="M2.7 10.6 L2.7 7.6 Q4.6 7.2 4.6 8.5 Q4.6 9.6 2.9 9.4"/><path d="M5.6 8.6 L7.3 8.6 Q7.3 7.4 6.4 7.5 Q5.5 7.6 5.6 8.7 Q5.8 9.7 7.2 9.4"/><path d="M8.3 9.6 L8.3 7.6 M8.3 8.2 Q9.9 6.9 9.9 8.4 L9.9 9.6"/></g></svg>
<div class="abs" style="left:925.8px;top:85.99px;width:14px;height:14px;box-sizing:border-box;border-radius:3.2px;background:#e3e6eb;border:1px solid #fbfbfb"></div>
<div class="abs" style="left:150px;top:428px;width:1008px;height:15px;background:#2e2e2e"></div>
<div class="abs" style="left:150px;top:428px;width:1008px;height:1px;background:#3a3a3a"></div>
<div class="abs" style="left:343px;top:432px;width:810px;height:8.2px;border-radius:4px;background:#727272"></div>
</div></div>
<div id="winb"></div>
<div class="abs" style="left:1157px;top:8px;width:1px;height:428px;background:#242424"></div>
</body></html>
